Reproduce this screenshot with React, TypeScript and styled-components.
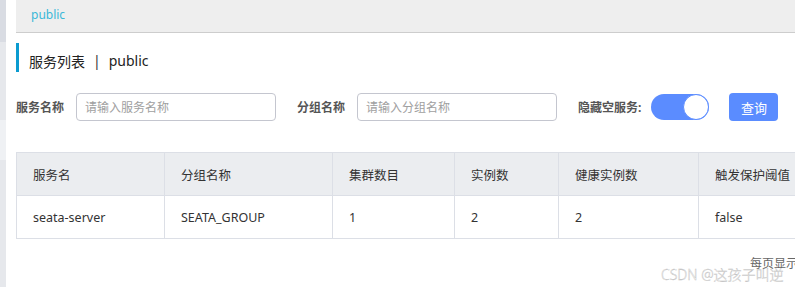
import styled, { createGlobalStyle } from 'styled-components';

const GlobalStyle = createGlobalStyle`
  html, body {
    margin: 0;
    padding: 0;
    background: #fff;
    overflow: hidden;
  }
  body {
    font-family: "Noto Sans", "Noto Sans CJK SC", sans-serif;
    color: #333;
  }
`;

const columns = [
  { title: '服务名', width: 148 },
  { title: '分组名称', width: 168 },
  { title: '集群数目', width: 122 },
  { title: '实例数', width: 104 },
  { title: '健康实例数', width: 140 },
  { title: '触发保护阈值', width: 140 },
];

const rows = [['seata-server', 'SEATA_GROUP', '1', '2', '2', 'false']];

export default function App() {
  return (
    <>
      <GlobalStyle />
      <Layout>
        <SideStrip>
          <StripPart $h={43} $bg="#d9dce3" />
          <StripPart $h={80} $bg="#e6e8ec" />
          <StripPart $h={40} $bg="#eff1f4" />
          <StripPart $h={130} $bg="#e6e8ec" />
        </SideStrip>
        <Main>
          <TopBar>
            <NamespaceLink>public</NamespaceLink>
          </TopBar>
          <PageTitle>
            服务列表<Divider>|</Divider>public
          </PageTitle>
          <SearchRow>
            <Label>服务名称</Label>
            <TextInput placeholder="请输入服务名称" />
            <Label>分组名称</Label>
            <TextInput placeholder="请输入分组名称" />
            <Label>隐藏空服务:</Label>
            <Switch>
              <Knob />
            </Switch>
            <QueryButton>查询</QueryButton>
          </SearchRow>
          <Table>
            <colgroup>
              {columns.map((c) => (
                <col key={c.title} style={{ width: c.width }} />
              ))}
            </colgroup>
            <thead>
              <tr>
                {columns.map((c) => (
                  <Th key={c.title}>{c.title}</Th>
                ))}
              </tr>
            </thead>
            <tbody>
              {rows.map((r) => (
                <tr key={r[0]}>
                  {r.map((v, i) => (
                    <Td key={i}>{v}</Td>
                  ))}
                </tr>
              ))}
            </tbody>
          </Table>
          <Pager>每页显示</Pager>
        </Main>
        <Watermark>CSDN @这孩子叫逆</Watermark>
      </Layout>
    </>
  );
}

const Layout = styled.div`
  position: relative;
  display: flex;
  width: 795px;
  height: 287px;
  overflow: hidden;
`;

const SideStrip = styled.div`
  width: 6px;
  margin-right: 10px;
  display: flex;
  flex-direction: column;
  flex-shrink: 0;
`;

const StripPart = styled.div<{ $h: number; $bg: string }>`
  height: ${({ $h }) => $h}px;
  background: ${({ $bg }) => $bg};
`;

const Main = styled.div`
  flex: 1;
  min-width: 0;
  display: flex;
  flex-direction: column;
`;

const TopBar = styled.div`
  height: 33px;
  box-sizing: border-box;
  background: #eeeeee;
  border-bottom: 1px solid #cdcdcd;
  display: flex;
  align-items: center;
  padding-left: 15px;
`;

const NamespaceLink = styled.span`
  font-size: 12px;
  color: #3ab8d8;
  margin-top: -4px;
`;

const PageTitle = styled.div`
  margin-top: 10px;
  height: 29px;
  border-left: 3px solid #0b9bd0;
  padding-left: 10px;
  padding-top: 6px;
  box-sizing: border-box;
  display: flex;
  align-items: center;
  font-size: 14px;
  color: #222;
`;

const Divider = styled.span`
  margin: 0 8px;
  color: #333;
`;

const SearchRow = styled.div`
  margin-top: 21px;
  display: flex;
  align-items: center;
  height: 28px;
`;

const Label = styled.span`
  font-size: 12px;
  font-weight: 700;
  color: #555;
  margin-right: 12px;
  &:not(:first-child) {
    margin-left: 21px;
  }
`;

const TextInput = styled.input`
  width: 200px;
  height: 28px;
  box-sizing: border-box;
  border: 1px solid #c4c6cf;
  border-radius: 4px;
  padding: 0 8px;
  font-size: 12px;
  font-family: "Noto Sans", "Noto Sans CJK SC", sans-serif;
  outline: none;
  &::placeholder {
    color: #a0a0a0;
  }
`;

const Switch = styled.div`
  width: 58px;
  height: 26px;
  border-radius: 13px;
  background: #5b8cff;
  display: flex;
  align-items: center;
  justify-content: flex-end;
  margin-left: -2px;
`;

const Knob = styled.div`
  width: 24px;
  height: 24px;
  border-radius: 50%;
  background: #fff;
  border: 1px solid #5b8cff;
`;

const QueryButton = styled.button`
  margin-left: 20px;
  width: 49px;
  height: 28px;
  border: none;
  border-radius: 4px;
  background: #5a8cff;
  color: #fff;
  font-size: 13px;
  font-family: "Noto Sans", "Noto Sans CJK SC", sans-serif;
  padding: 0;
`;

const Table = styled.table`
  margin-top: 31px;
  border-collapse: collapse;
  table-layout: fixed;
  width: 822px;
  font-size: 12.5px;
`;

const Th = styled.th`
  height: 42px;
  background: #ebedf0;
  border: 1px solid #dcdfe6;
  text-align: left;
  font-weight: 400;
  padding: 0 16px;
  color: #333;
  white-space: nowrap;
`;

const Td = styled.td`
  height: 42px;
  border: 1px solid #dcdfe6;
  padding: 0 16px;
  color: #333;
  white-space: nowrap;
`;

const Pager = styled.div`
  margin-top: 15px;
  margin-left: 734px;
  font-size: 12px;
  color: #666;
  white-space: nowrap;
`;

const Watermark = styled.div`
  position: absolute;
  left: 661px;
  top: 264px;
  font-size: 14px;
  font-weight: 300;
  color: #f4f4f4;
  -webkit-text-stroke: 0.35px #bdbdbd;
  white-space: nowrap;
`;
